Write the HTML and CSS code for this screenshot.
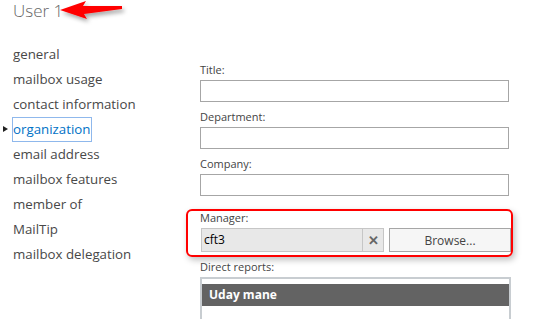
FILE: index.html
```html
<!DOCTYPE html>
<html>
<head>
	<meta charset="UTF-8">
	<title>User 1</title>
<link rel="stylesheet" href="styles.css">
</head>
<body>

  <div class="kopf">
    <span class="titel">User 1</span>
    <svg class="pfeil" width="70" height="28" viewBox="0 0 70 28">
      <defs>
        <filter id="schatten" x="-20%" y="-40%" width="150%" height="200%">
          <feDropShadow dx="2" dy="3" stdDeviation="2" flood-color="#000" flood-opacity="0.35"/>
        </filter>
      </defs>
      <polygon points="2,10 28,1 25,6 64,6 64,9 26,14 29,19" fill="#f00" filter="url(#schatten)"/>
    </svg>
  </div>

  <div class="haupt">
    <ul class="navi">
      <li>general</li>
      <li>mailbox usage</li>
      <li>contact information</li>
      <li class="aktiv"><span>organization</span></li>
      <li>email address</li>
      <li>mailbox features</li>
      <li>member of</li>
      <li>MailTip</li>
      <li>mailbox delegation</li>
    </ul>

    <div class="inhalt">
      <div class="feld">
        <label>Title:</label>
        <div class="eingabe"></div>
      </div>
      <div class="feld">
        <label>Department:</label>
        <div class="eingabe"></div>
      </div>
      <div class="feld">
        <label>Company:</label>
        <div class="eingabe"></div>
      </div>

      <div class="feld manager">
        <span class="markierung"></span>
        <label>Manager:</label>
        <div class="zeile">
          <div class="wahl">
            <span class="wert">cft3</span>
            <span class="loeschen">&#x2715;</span>
          </div>
          <button type="button" class="knopf">Browse...</button>
        </div>
      </div>

      <div class="feld">
        <label>Direct reports:</label>
        <div class="liste">
          <div class="eintrag">Uday mane</div>
        </div>
      </div>
    </div>
  </div>

</body>
</html>
```

FILE: styles.css
```css
body {
	margin: 0;
	background-color: #fff;
	font-family: "Open Sans", "Noto Sans", sans-serif;
	color: #444;
	overflow: hidden;
}
.kopf {
	position: relative;
	height: 28px;
	padding-left: 13px;
}
.titel {
	font-size: 17px;
	font-weight: 300;
	color: #666;
	line-height: 22px;
}
.pfeil {
	position: absolute;
	left: 58px;
	top: 0;
}
.haupt {
	display: flex;
}
.navi {
	list-style: none;
	margin: 0;
	padding: 14px 0 0 13px;
	width: 187px;
	font-size: 13.3px;
}
.navi li {
	height: 25px;
	line-height: 25px;
	color: #484848;
	position: relative;
}
.navi .aktiv span {
	color: #0072c6;
	border: 1px solid #8fb8ec;
	padding: 2px 1px 3px 0;
	margin-left: -1px;
}
.navi .aktiv::before {
	content: "";
	position: absolute;
	left: -10px;
	top: 9px;
	border-left: 5px solid #222;
	border-top: 3px solid transparent;
	border-bottom: 3px solid transparent;
}
.inhalt {
	width: 311px;
	padding-top: 34px;
}
.feld {
	margin-bottom: 7px;
}
.feld label {
	display: block;
	font-size: 11px;
	line-height: 16px;
	margin-bottom: 2px;
	color: #444;
}
.eingabe {
	height: 20px;
	border: 1px solid #a6a6a6;
	margin-right: 2px;
}
.manager {
	position: relative;
	margin-top: 14px;
}
.markierung {
	position: absolute;
	left: -14px;
	right: -2px;
	top: -1px;
	height: 44px;
	border: 2px solid #f00;
	border-radius: 6px;
	box-shadow: 2px 3px 6px rgba(0,0,0,0.25);
}
.zeile {
	display: flex;
	gap: 5px;
}
.wahl {
	display: flex;
	width: 181px;
	height: 22px;
	border: 1px solid #c6c6c6;
	background-color: #e8e8e8;
	margin-left: 1px;
}
.wert {
	flex: 1;
	font-size: 12px;
	line-height: 22px;
	color: #000;
	padding-left: 2px;
}
.loeschen {
	width: 20px;
	border-left: 1px solid #c6c6c6;
	text-align: center;
	font-size: 13px;
	font-weight: bold;
	line-height: 22px;
	color: #666;
}
.knopf {
	flex: 1;
	height: 24px;
	border: 1px solid #a6a6a6;
	background-color: #f6f6f6;
	font-family: "Open Sans", "Noto Sans", sans-serif;
	font-size: 12px;
	color: #444;
	margin: 0;
}
.liste {
	height: 39px;
	border: 2px solid #c8cdd1;
	border-bottom: none;
	padding-top: 5px;
}
.eintrag {
	background-color: #636363;
	color: #fff;
	font-weight: bold;
	font-size: 12px;
	line-height: 22px;
	padding-left: 7px;
}
```
